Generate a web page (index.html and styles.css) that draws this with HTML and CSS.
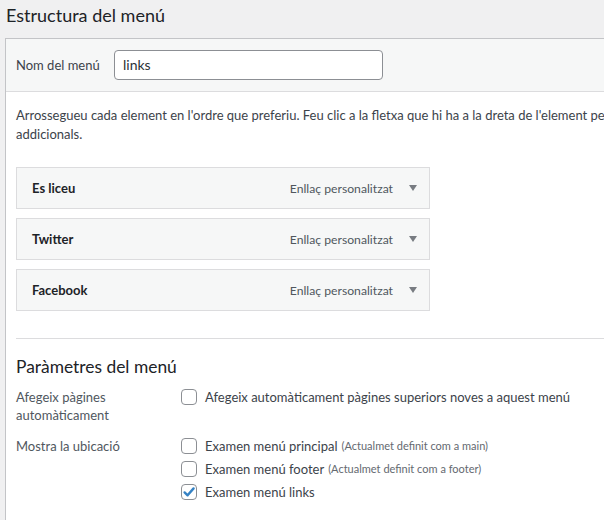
FILE: index.html
```html
<!DOCTYPE html>
<html lang="ca">
<head>
<meta charset="utf-8">
<title>Estructura del menú</title>
<link rel="stylesheet" href="styles.css">
</head>
<body>
<h2 class="page-title">Estructura del menú</h2>
<div class="menu-box">
  <div class="menu-header">
    <label class="name-label" for="menu-name">Nom del menú</label>
    <input class="name-input" id="menu-name" type="text" value="links">
  </div>
  <div class="menu-body">
    <p class="instructions"><span class="line">Arrossegueu cada element en l'ordre que preferiu. Feu clic a la fletxa que hi ha a la dreta de l'element per a mostrar opcions de configuració</span><br>addicionals.</p>
    <ul class="items">
      <li class="item"><span class="item-title">Es liceu</span><span class="item-type">Enllaç personalitzat</span><span class="arrow"></span></li>
      <li class="item"><span class="item-title">Twitter</span><span class="item-type">Enllaç personalitzat</span><span class="arrow"></span></li>
      <li class="item"><span class="item-title">Facebook</span><span class="item-type">Enllaç personalitzat</span><span class="arrow"></span></li>
    </ul>
    <div class="settings">
      <h3 class="settings-title">Paràmetres del menú</h3>
      <div class="setting-row">
        <div class="setting-label">Afegeix pàgines automàticament</div>
        <div class="setting-options">
          <label class="opt"><span class="cb"></span>Afegeix automàticament pàgines superiors noves a aquest menú</label>
        </div>
      </div>
      <div class="setting-row">
        <div class="setting-label">Mostra la ubicació</div>
        <div class="setting-options">
          <label class="opt"><span class="cb"></span>Examen menú principal <span class="note">(Actualmet definit com a main)</span></label>
          <label class="opt"><span class="cb"></span>Examen menú footer <span class="note">(Actualmet definit com a footer)</span></label>
          <label class="opt"><span class="cb checked"><svg viewBox="0 0 16 16" width="16" height="16"><path d="M3.6 8.4 L6.6 11.3 L12.6 4.4" fill="none" stroke="#3582c4" stroke-width="2.4" stroke-linecap="round" stroke-linejoin="round"/></svg></span>Examen menú links</label>
        </div>
      </div>
    </div>
  </div>
</div>
</body>
</html>
```

FILE: styles.css
```css
* { box-sizing: border-box; }
body {
  margin: 0;
  background: #f0f0f1;
  font-family: Lato, "Liberation Sans", sans-serif;
  font-size: 13px;
  color: #3c434a;
  overflow: hidden;
  width: 604px;
  height: 520px;
}
.page-title {
  margin: 0;
  padding: 3px 0 0 6px;
  height: 38px;
  font-size: 18px;
  font-weight: 400;
  color: #1d2327;
  line-height: 24px;
}
.menu-box {
  margin-left: 5px;
  width: 680px;
  border: 1px solid #c3c4c7;
  background: #fff;
}
.menu-header {
  display: flex;
  align-items: center;
  height: 53px;
  padding: 0 0 1px 10px;
  background: #f6f7f7;
  border-bottom: 1px solid #dcdcde;
}
.name-label {
  width: 98px;
  color: #3c434a;
}
.name-input {
  width: 269px;
  height: 30px;
  border: 1px solid #8c8f94;
  border-radius: 4px;
  padding: 0 8px;
  font: inherit;
  font-size: 14px;
  color: #2c3338;
  background: #fff;
}
.menu-body {
  padding: 14px 10px 0 10px;
}
.instructions {
  margin: 0;
  line-height: 19px;
  color: #3c434a;
}
.instructions .line { white-space: nowrap; }
.items {
  list-style: none;
  margin: 23px 0 0 0;
  padding: 0;
  display: flex;
  flex-direction: column;
  gap: 9px;
  width: 414px;
}
.item {
  display: flex;
  align-items: center;
  height: 42px;
  padding: 0 12px 0 15px;
  background: #f6f7f7;
  border: 1px solid #dcdcde;
}
.item-title {
  flex: 1;
  font-weight: 700;
  color: #1d2327;
}
.item-type {
  font-size: 12.2px;
  color: #50575e;
  margin-right: 16px;
}
.arrow {
  width: 0;
  height: 0;
  border-left: 4px solid transparent;
  border-right: 4px solid transparent;
  border-top: 6px solid #787c82;
}
.settings {
  margin-top: 27px;
  border-top: 1px solid #dcdcde;
  padding-top: 17px;
  padding-bottom: 30px;
}
.settings-title {
  margin: 0 0 10px 0;
  font-size: 17.4px;
  font-weight: 400;
  color: #1d2327;
  line-height: 22px;
}
.setting-row {
  display: flex;
  margin-bottom: 13px;
}
.setting-label {
  width: 165px;
  line-height: 18px;
  color: #50575e;
  padding-right: 20px;
}
.setting-options {
  display: flex;
  flex-direction: column;
  gap: 7px;
  padding-top: 1px;
}
.opt {
  display: flex;
  align-items: center;
  line-height: 16px;
  color: #3c434a;
}
.cb {
  width: 16px;
  height: 16px;
  border: 1px solid #8c8f94;
  border-radius: 4px;
  background: #fff;
  margin-right: 8px;
  flex: none;
  position: relative;
}
.cb svg { position: absolute; left: -1px; top: -1px; }
.note {
  font-size: 11px;
  color: #646970;
  margin-left: 4px;
}
```
